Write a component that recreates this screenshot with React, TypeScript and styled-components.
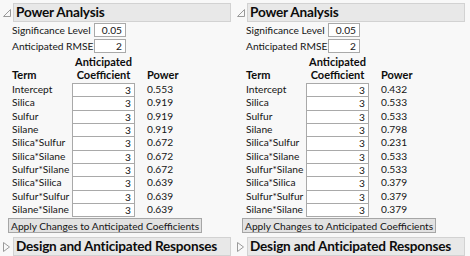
import React from "react";
import styled, { createGlobalStyle } from "styled-components";

const Global = createGlobalStyle`
  html, body {
    margin: 0;
    padding: 0;
    background: #f8f8f8;
  }
  body {
    font-family: Lato, "Noto Sans", sans-serif;
    font-size: 10.2px;
    line-height: 13px;
    color: #151515;
  }
`;

const Page = styled.div`
  display: flex;
  width: 470px;
  height: 256px;
  overflow: hidden;
`;

const Panel = styled.div`
  width: 234px;
  flex: none;
  display: flex;
  flex-direction: column;
  padding-top: 3px;
`;

const OutlineRow = styled.div`
  display: flex;
  align-items: center;
  height: 19px;
`;

const Toggle = styled.span`
  width: 13px;
  flex: none;
  display: flex;
  justify-content: center;
  align-items: center;
`;

const TitleBox = styled.div`
  width: 218px;
  height: 19px;
  box-sizing: border-box;
  background: #e8e8e8;
  border: 1px solid #d2d2d2;
  padding-left: 2px;
  display: flex;
  align-items: center;
  font-size: 13.6px;
  font-weight: 700;
  letter-spacing: -0.2px;
  color: #0d0d0d;
  white-space: nowrap;
`;

const Body = styled.div`
  padding-left: 12px;
  display: flex;
  flex-direction: column;
`;

const Setting = styled.div`
  display: flex;
  align-items: center;
  height: 14px;
  margin-top: ${({ $gap }: { $gap: number }) => $gap}px;
`;

const SettingLabel = styled.span`
  width: 82px;
  white-space: nowrap;
`;

const SmallBox = styled.span`
  width: 32px;
  height: 14px;
  box-sizing: border-box;
  background: #fff;
  border: 1px solid #a9a9a9;
  text-align: right;
  padding-right: 3px;
  line-height: 12px;
`;

const HeadRow = styled.div`
  display: flex;
  align-items: flex-end;
  height: 13px;
  font-size: 11px;
  font-weight: 700;
  color: #0d0d0d;
  white-space: nowrap;
`;

const TermCol = styled.span`
  width: 60px;
  flex: none;
  white-space: nowrap;
`;

const CoefHead = styled.span`
  width: 63px;
  flex: none;
  text-align: center;
`;

const PowerCol = styled.span`
  padding-left: 12px;
`;

const Rows = styled.div`
  margin-top: 2px;
`;

const Row = styled.div`
  display: flex;
  align-items: center;
  height: 13.333px;
`;

const CoefBox = styled.span`
  width: 63px;
  flex: none;
  height: 14.333px;
  box-sizing: border-box;
  background: #fff;
  border: 1px solid #a9a9a9;
  text-align: right;
  padding-right: 3px;
  line-height: 12px;
  align-self: flex-start;
`;

const ApplyButton = styled.button`
  margin: 2px 0 0 -4px;
  width: 194px;
  height: 15px;
  box-sizing: border-box;
  padding: 0 0 0 2px;
  background: #e2e2e2;
  border: 1px solid #a6a6a6;
  font-family: inherit;
  font-size: 10.2px;
  line-height: 12px;
  color: #151515;
  text-align: left;
  white-space: nowrap;
`;

const Gap = styled.div`
  height: 4px;
`;

const Twisty = ({ open }: { open: boolean }) =>
  open ? (
    <svg width="8" height="8" viewBox="0 0 8 8">
      <path d="M7.5 0.5 L7.5 7.5 L0.5 7.5 Z" fill="none" stroke="#9a9a9a" />
    </svg>
  ) : (
    <svg width="7" height="10" viewBox="0 0 7 10">
      <path d="M0.5 0.5 L6.5 5 L0.5 9.5 Z" fill="none" stroke="#9a9a9a" />
    </svg>
  );

const terms = [
  "Intercept",
  "Silica",
  "Sulfur",
  "Silane",
  "Silica*Sulfur",
  "Silica*Silane",
  "Sulfur*Silane",
  "Silica*Silica",
  "Sulfur*Sulfur",
  "Silane*Silane",
];

interface Props {
  powers: string[];
}

const PowerPanel = ({ powers }: Props) => (
  <Panel>
    <OutlineRow>
      <Toggle>
        <Twisty open />
      </Toggle>
      <TitleBox>Power Analysis</TitleBox>
    </OutlineRow>
    <Body>
      <Setting $gap={1}>
        <SettingLabel>Significance Level</SettingLabel>
        <SmallBox>0.05</SmallBox>
      </Setting>
      <Setting $gap={2}>
        <SettingLabel>Anticipated RMSE</SettingLabel>
        <SmallBox>2</SmallBox>
      </Setting>
      <HeadRow style={{ marginTop: 2 }}>
        <TermCol />
        <CoefHead>Anticipated</CoefHead>
      </HeadRow>
      <HeadRow>
        <TermCol>Term</TermCol>
        <CoefHead>Coefficient</CoefHead>
        <PowerCol>Power</PowerCol>
      </HeadRow>
      <Rows>
        {terms.map((t, i) => (
          <Row key={t}>
            <TermCol>{t}</TermCol>
            <CoefBox>3</CoefBox>
            <PowerCol>{powers[i]}</PowerCol>
          </Row>
        ))}
      </Rows>
      <ApplyButton>Apply Changes to Anticipated Coefficients</ApplyButton>
    </Body>
    <Gap />
    <OutlineRow>
      <Toggle>
        <Twisty open={false} />
      </Toggle>
      <TitleBox>Design and Anticipated Responses</TitleBox>
    </OutlineRow>
  </Panel>
);

export default function App() {
  return (
    <Page>
      <Global />
      <PowerPanel
        powers={["0.553", "0.919", "0.919", "0.919", "0.672", "0.672", "0.672", "0.639", "0.639", "0.639"]}
      />
      <PowerPanel
        powers={["0.432", "0.533", "0.533", "0.798", "0.231", "0.533", "0.533", "0.379", "0.379", "0.379"]}
      />
    </Page>
  );
}
